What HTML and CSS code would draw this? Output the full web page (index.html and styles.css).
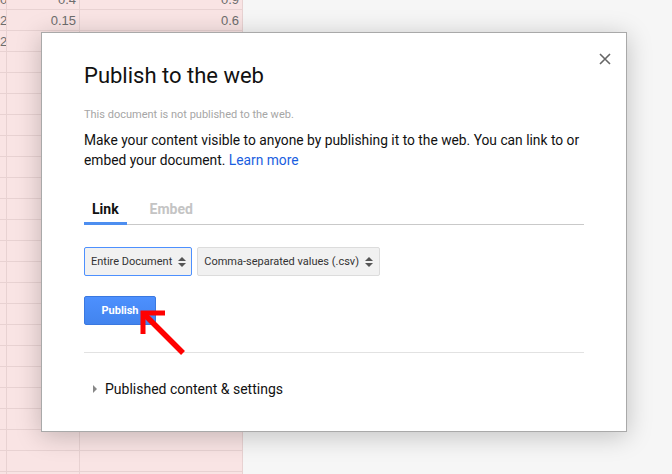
FILE: index.html
```html
<!DOCTYPE html>
<html>
<head>
<meta charset="utf-8">
<link rel="stylesheet" href="styles.css">
</head>
<body>
<div class="page">
  <div class="sheet">
    <div class="row"><div class="c c0">0</div><div class="c c1">0.4</div><div class="c c2">0.9</div></div>
    <div class="row"><div class="c c0">2</div><div class="c c1">0.15</div><div class="c c2">0.6</div></div>
    <div class="row"><div class="c c0">2</div><div class="c c1"></div><div class="c c2"></div></div>
    <div class="row"><div class="c c0"></div><div class="c c1"></div><div class="c c2"></div></div>
    <div class="row"><div class="c c0"></div><div class="c c1"></div><div class="c c2"></div></div>
    <div class="row"><div class="c c0"></div><div class="c c1"></div><div class="c c2"></div></div>
    <div class="row"><div class="c c0"></div><div class="c c1"></div><div class="c c2"></div></div>
    <div class="row"><div class="c c0"></div><div class="c c1"></div><div class="c c2"></div></div>
    <div class="row"><div class="c c0"></div><div class="c c1"></div><div class="c c2"></div></div>
    <div class="row"><div class="c c0"></div><div class="c c1"></div><div class="c c2"></div></div>
    <div class="row"><div class="c c0"></div><div class="c c1"></div><div class="c c2"></div></div>
    <div class="row"><div class="c c0"></div><div class="c c1"></div><div class="c c2"></div></div>
    <div class="row"><div class="c c0"></div><div class="c c1"></div><div class="c c2"></div></div>
    <div class="row"><div class="c c0"></div><div class="c c1"></div><div class="c c2"></div></div>
    <div class="row"><div class="c c0"></div><div class="c c1"></div><div class="c c2"></div></div>
    <div class="row"><div class="c c0"></div><div class="c c1"></div><div class="c c2"></div></div>
    <div class="row"><div class="c c0"></div><div class="c c1"></div><div class="c c2"></div></div>
    <div class="row"><div class="c c0"></div><div class="c c1"></div><div class="c c2"></div></div>
    <div class="row"><div class="c c0"></div><div class="c c1"></div><div class="c c2"></div></div>
    <div class="row"><div class="c c0"></div><div class="c c1"></div><div class="c c2"></div></div>
    <div class="row"><div class="c c0"></div><div class="c c1"></div><div class="c c2"></div></div>
    <div class="row"><div class="c c0"></div><div class="c c1"></div><div class="c c2"></div></div>
    <div class="row"><div class="c c0"></div><div class="c c1"></div><div class="c c2"></div></div>
    <div class="row"><div class="c c0"></div><div class="c c1"></div><div class="c c2"></div></div>
  </div>

  <div class="dialog">
    <button class="close" aria-label="Close">
      <svg width="12" height="12" viewBox="0 0 12 12"><path d="M1 1L11 11M11 1L1 11" stroke="#666" stroke-width="1.6" fill="none"/></svg>
    </button>
    <h1 class="title">Publish to the web</h1>
    <p class="status">This document is not published to the web.</p>
    <p class="desc">Make your content visible to anyone by publishing it to the web. You can link to or embed your document. <a class="link" href="#">Learn more</a></p>
    <div class="tabs">
      <div class="tab active">Link</div>
      <div class="tab">Embed</div>
    </div>
    <div class="selects">
      <div class="select focused">Entire Document <span class="updown"><svg width="8" height="12" viewBox="0 0 8 12"><path d="M0 5L4 1L8 5Z M0 7L4 11L8 7Z" fill="#555"/></svg></span></div>
      <div class="select">Comma-separated values (.csv) <span class="updown"><svg width="8" height="12" viewBox="0 0 8 12"><path d="M0 5L4 1L8 5Z M0 7L4 11L8 7Z" fill="#555"/></svg></span></div>
    </div>
    <div class="actions">
      <button class="publish">Publish</button>
    </div>
    <div class="divider"></div>
    <div class="expander">
      <svg width="6" height="8" viewBox="0 0 6 8"><path d="M1 0L5 4L1 8Z" fill="#888"/></svg>
      <span>Published content &amp; settings</span>
    </div>
  </div>

  <svg class="arrow" width="60" height="60" viewBox="0 0 60 60">
    <path d="M13 13L53 53" stroke="#ff0000" stroke-width="5.5" fill="none"/>
    <path d="M35 13H13V34" stroke="#ff0000" stroke-width="5" fill="none" stroke-linejoin="miter"/>
  </svg>
</div>
</body>
</html>
```

FILE: styles.css
```css
* { box-sizing: border-box; }
html, body { margin: 0; padding: 0; }
body { background: #f6f6f6; width: 672px; height: 474px; overflow: hidden; }
.page { position: relative; width: 672px; height: 474px; overflow: hidden; display: flow-root; }

.sheet { width: 243px; margin-top: -11px; background: #f9e4e4; font-family: "Liberation Sans", Arial, sans-serif; font-size: 13px; color: #6d6d6d; }
.row { display: grid; grid-template-columns: 7px 73px 163px; height: 21px; border-bottom: 1px solid #e8d2d2; }
.c { border-right: 1px solid #e8d2d2; text-align: right; padding-right: 3px; line-height: 21px; white-space: nowrap; overflow: hidden; }
.c0 { padding-right: 1px; }
.c1 { padding-right: 3px; }

.dialog { position: absolute; left: 41px; top: 32px; width: 586px; height: 400px; background: #fff; border: 1px solid #a9a9a9; box-shadow: 0 4px 24px rgba(0,0,0,0.22); padding: 30px 42px 0 42px; font-family: Roboto, "Noto Sans", sans-serif; color: #222; }
.close { position: absolute; right: 14px; top: 19px; width: 14px; height: 14px; padding: 0; border: 0; background: none; display: flex; align-items: center; justify-content: center; }
.title { margin: 0; font-size: 22px; font-weight: 400; line-height: 26px; color: #111; }
.status { margin: 19px 0 0; font-size: 11px; line-height: 14px; color: #a6a6a6; }
.desc { margin: 8px -4px 0 0; font-size: 13.8px; line-height: 20px; color: #111; }
.link { color: #1a5ee0; text-decoration: none; }

.tabs { display: flex; margin-top: 29px; border-bottom: 1px solid #c9c9c9; height: 26px; }
.tab { font-size: 14px; font-weight: 700; color: #c4c4c4; padding: 0 8px; line-height: 20px; margin-right: 15px; }
.tab.active { color: #111; border-bottom: 3px solid #4d8ef0; margin-bottom: -1px; }

.selects { display: flex; gap: 5px; margin-top: 22px; }
.select { display: flex; align-items: center; gap: 6px; height: 29px; padding: 0 5px 0 6px; background: #f1f1f1; border: 1px solid #dcdcdc; border-radius: 2px; font-size: 11px; color: #333; }
.select + .select { padding-right: 6px; }
.select.focused { border-color: #4d90fe; }
.updown { display: flex; }

.actions { margin-top: 20px; }
.publish { width: 72px; height: 29px; border: 1px solid #3a78e0; border-radius: 2px; background: linear-gradient(#4d90fe, #4284ee); color: #fff; font-family: Roboto, "Noto Sans", sans-serif; font-size: 11px; font-weight: 700; padding: 0; }

.divider { margin-top: 27px; height: 1px; background: #e2e2e2; }
.expander { display: flex; align-items: center; gap: 7px; margin-top: 28px; padding-left: 8px; font-size: 14px; color: #111; }

.arrow { position: absolute; left: 130px; top: 300px; }
```
